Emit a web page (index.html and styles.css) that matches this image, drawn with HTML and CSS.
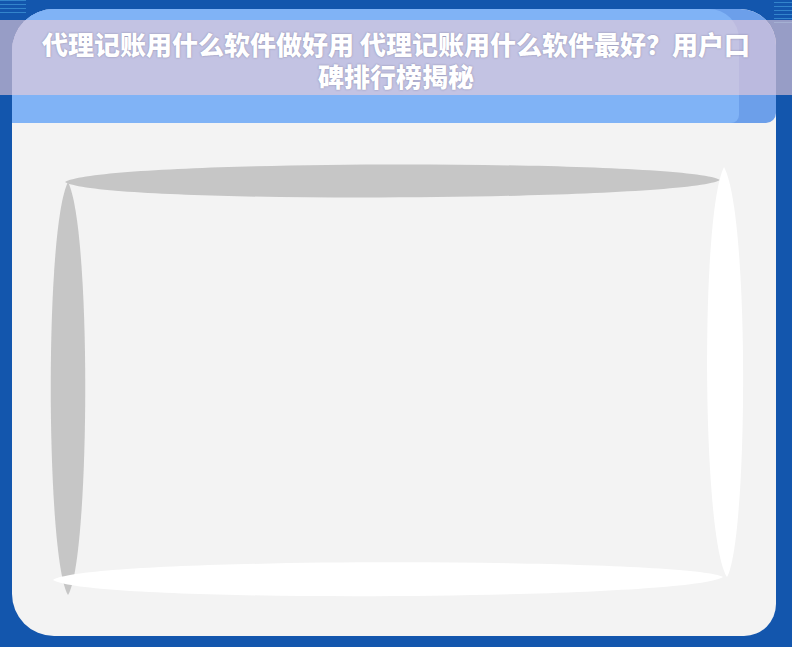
FILE: index.html
```html
<!DOCTYPE html>
<html lang="zh-CN">
<head>
    <meta charset="UTF-8">
    <meta name="viewport" content="width=device-width, initial-scale=1.0">
    <title>代理记账用什么软件做好用</title>
    <link rel="stylesheet" href="styles.css">
</head>
<body>
    <div class="window">
        <div class="window-top">
            <div class="title-bar"></div>
        </div>
        <div class="window-body">
            <svg class="frame" width="764" height="513" viewBox="12 123 764 513">
                <!-- shaded strokes -->
                <path d="M65 182 C 100 159, 685 159, 720 180 C 685 201, 100 205, 65 182 Z" fill="#c6c6c6"/>
                <path d="M68 182 C 44 230, 46 560, 68 595 C 90 560, 92 230, 68 182 Z" fill="#c6c6c6"/>
                <!-- highlight strokes -->
                <path d="M724 167 C 700 215, 702 540, 727 577 C 748 540, 750 215, 724 167 Z" fill="#ffffff"/>
                <path d="M53 580 C 90 556, 690 558, 723 577 C 690 600, 90 604, 53 580 Z" fill="#ffffff"/>
            </svg>
        </div>
    </div>

    <div class="caption">
        <h1>代理记账用什么软件做好用 代理记账用什么软件最好？用户口碑排行榜揭秘</h1>
    </div>
</body>
</html>
```

FILE: styles.css
```css
html,
body {
    margin: 0;
}

body {
    position: relative;
    width: 792px;
    height: 647px;
    box-sizing: border-box;
    padding: 9px 16px 11px 12px;
    overflow: hidden;
    background-color: #1356ad;
    font-family: "Noto Sans CJK SC", "Noto Sans", sans-serif;
}

/* полоски по углам фона */
body::before,
body::after {
    content: "";
    position: absolute;
    background: repeating-linear-gradient(180deg, rgba(90, 190, 240, 0.45) 0 1px, transparent 1px 4px);
}

body::before {
    top: 0;
    left: 0;
    width: 26px;
    height: 14px;
}

body::after {
    top: 2px;
    right: 0;
    width: 18px;
    height: 22px;
}

/* Окно */
.window {
    height: 100%;
    display: flex;
    flex-direction: column;
    background-color: #f3f3f3;
    border-radius: 42px 36px 32px 42px;
    overflow: hidden;
    position: relative;
    z-index: 1;
}

.window-top {
    flex: none;
    height: 114px;
    background-color: #6c9fea;
    border-bottom-right-radius: 10px;
}

.title-bar {
    width: 727px;
    height: 100%;
    background-color: #80b3f6;
    border-radius: 0 30px 8px 0;
}

.window-body {
    flex: 1;
}

.frame {
    display: block;
}

/* Заголовок поверх картинки */
.caption {
    position: absolute;
    top: 20px;
    left: 0;
    right: 0;
    z-index: 2;
    height: 75px;
    box-sizing: border-box;
    padding: 8px 30px 0;
    background-color: rgba(240, 205, 215, 0.6);
    text-align: center;
}

.caption h1 {
    margin: 0;
    font-size: 26px;
    font-weight: 900;
    line-height: 32px;
    color: #ffffff;
    text-shadow: 0 0 2px rgba(60, 60, 90, 0.45);
}
```
